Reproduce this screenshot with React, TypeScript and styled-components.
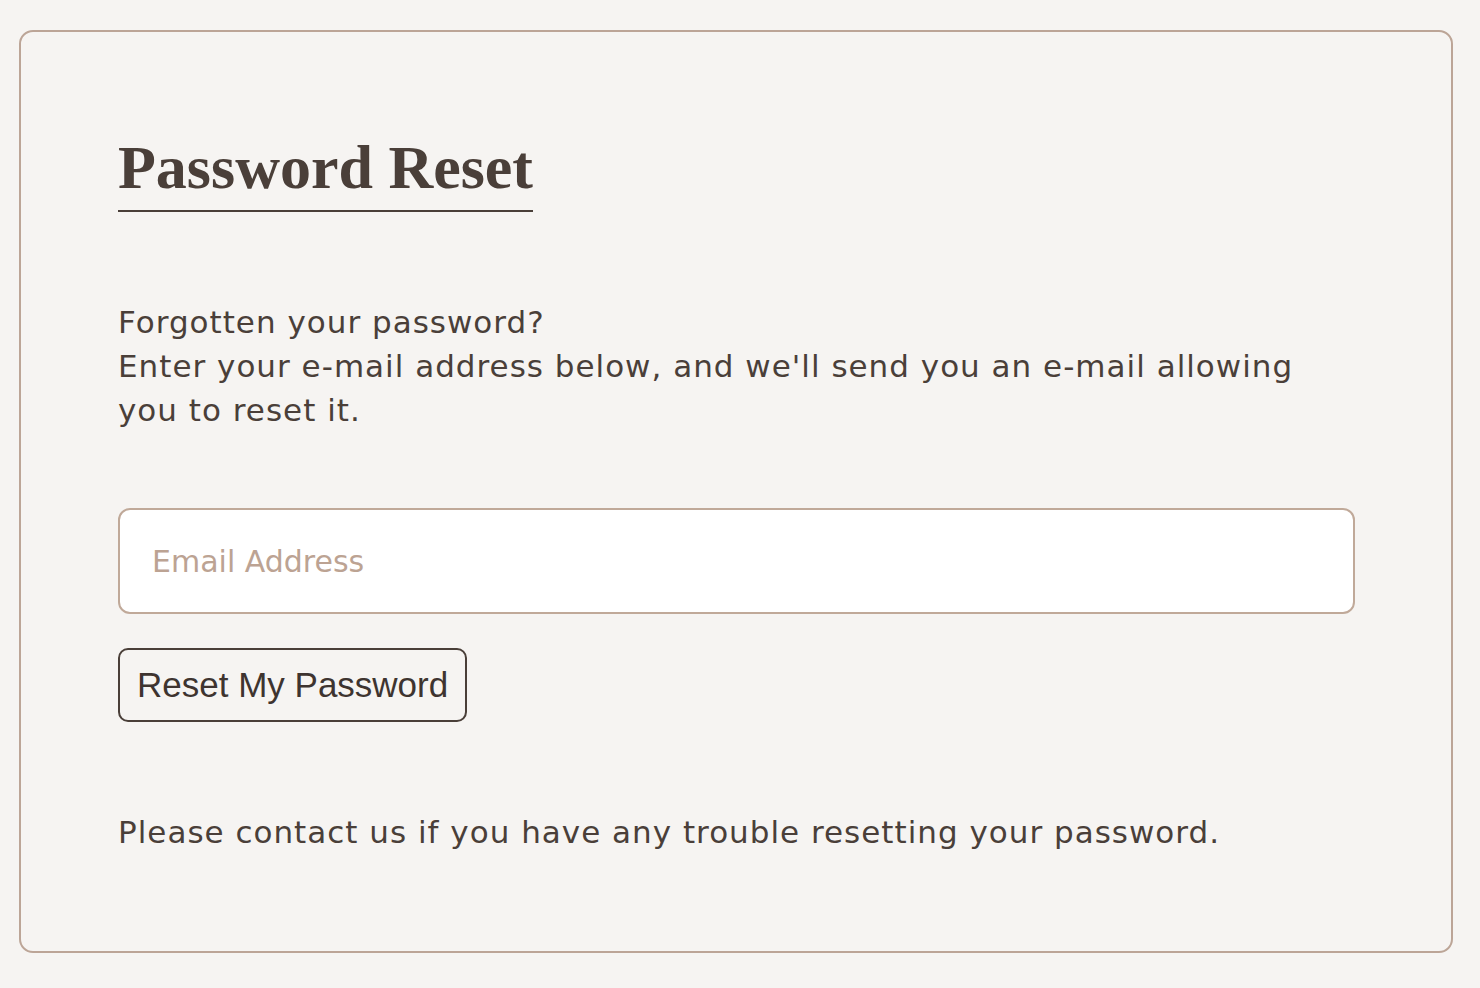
import styled, { createGlobalStyle } from 'styled-components';

const GlobalStyle = createGlobalStyle`
  html, body {
    margin: 0;
    padding: 0;
    background: #f6f4f2;
  }
  body {
    font-family: "DejaVu Sans", "Noto Sans", sans-serif;
    color: #4a3f39;
  }
`;

export default function App() {
  return (
    <>
      <GlobalStyle />
      <Page>
        <Card>
          <Title>Password Reset</Title>
          <Intro>
            Forgotten your password?
            <br />
            Enter your e-mail address below, and we'll send you an e-mail allowing you to reset it.
          </Intro>
          <Form onSubmit={(e) => e.preventDefault()}>
            <EmailInput type="email" placeholder="Email Address" />
            <SubmitButton type="submit">Reset My Password</SubmitButton>
          </Form>
          <Note>Please contact us if you have any trouble resetting your password.</Note>
        </Card>
      </Page>
    </>
  );
}

const Page = styled.div`
  padding: 30px 27px 35px 19px;
`;

const Card = styled.div`
  border: 2px solid #bca597;
  border-radius: 14px;
  padding: 100px 96px 97px 97px;
  display: flex;
  flex-direction: column;
  align-items: flex-start;
`;

const Title = styled.h1`
  display: inline-block;
  margin: 0;
  font-family: "Liberation Serif", "Times New Roman", serif;
  font-weight: bold;
  font-size: 62px;
  line-height: 70px;
  color: #4a3f39;
  padding-bottom: 8px;
  border-bottom: 2px solid #4a3f39;
`;

const Intro = styled.p`
  margin: 88px 0 0;
  max-width: 1195px;
  font-size: 31px;
  line-height: 44px;
  letter-spacing: 1px;
`;

const Form = styled.form`
  align-self: stretch;
  margin-top: 76px;
  display: flex;
  flex-direction: column;
  align-items: flex-start;
  gap: 34px;
`;

const EmailInput = styled.input`
  align-self: stretch;
  box-sizing: border-box;
  height: 106px;
  padding: 0 32px;
  border: 2px solid #c0a999;
  border-radius: 12px;
  background: #fff;
  font-family: "DejaVu Sans", "Noto Sans", sans-serif;
  font-size: 30px;
  color: #4a3f39;
  outline: none;

  &::placeholder {
    color: #bca393;
  }
`;

const SubmitButton = styled.button`
  box-sizing: border-box;
  height: 74px;
  padding: 0 17px;
  border: 2px solid #4a3f39;
  border-radius: 10px;
  background: transparent;
  font-family: "Liberation Sans", Arial, sans-serif;
  font-size: 35px;
  color: #3e3430;
  cursor: pointer;
`;

const Note = styled.p`
  margin: 88px 0 0;
  font-size: 31px;
  line-height: 44px;
  letter-spacing: 1px;
`;
